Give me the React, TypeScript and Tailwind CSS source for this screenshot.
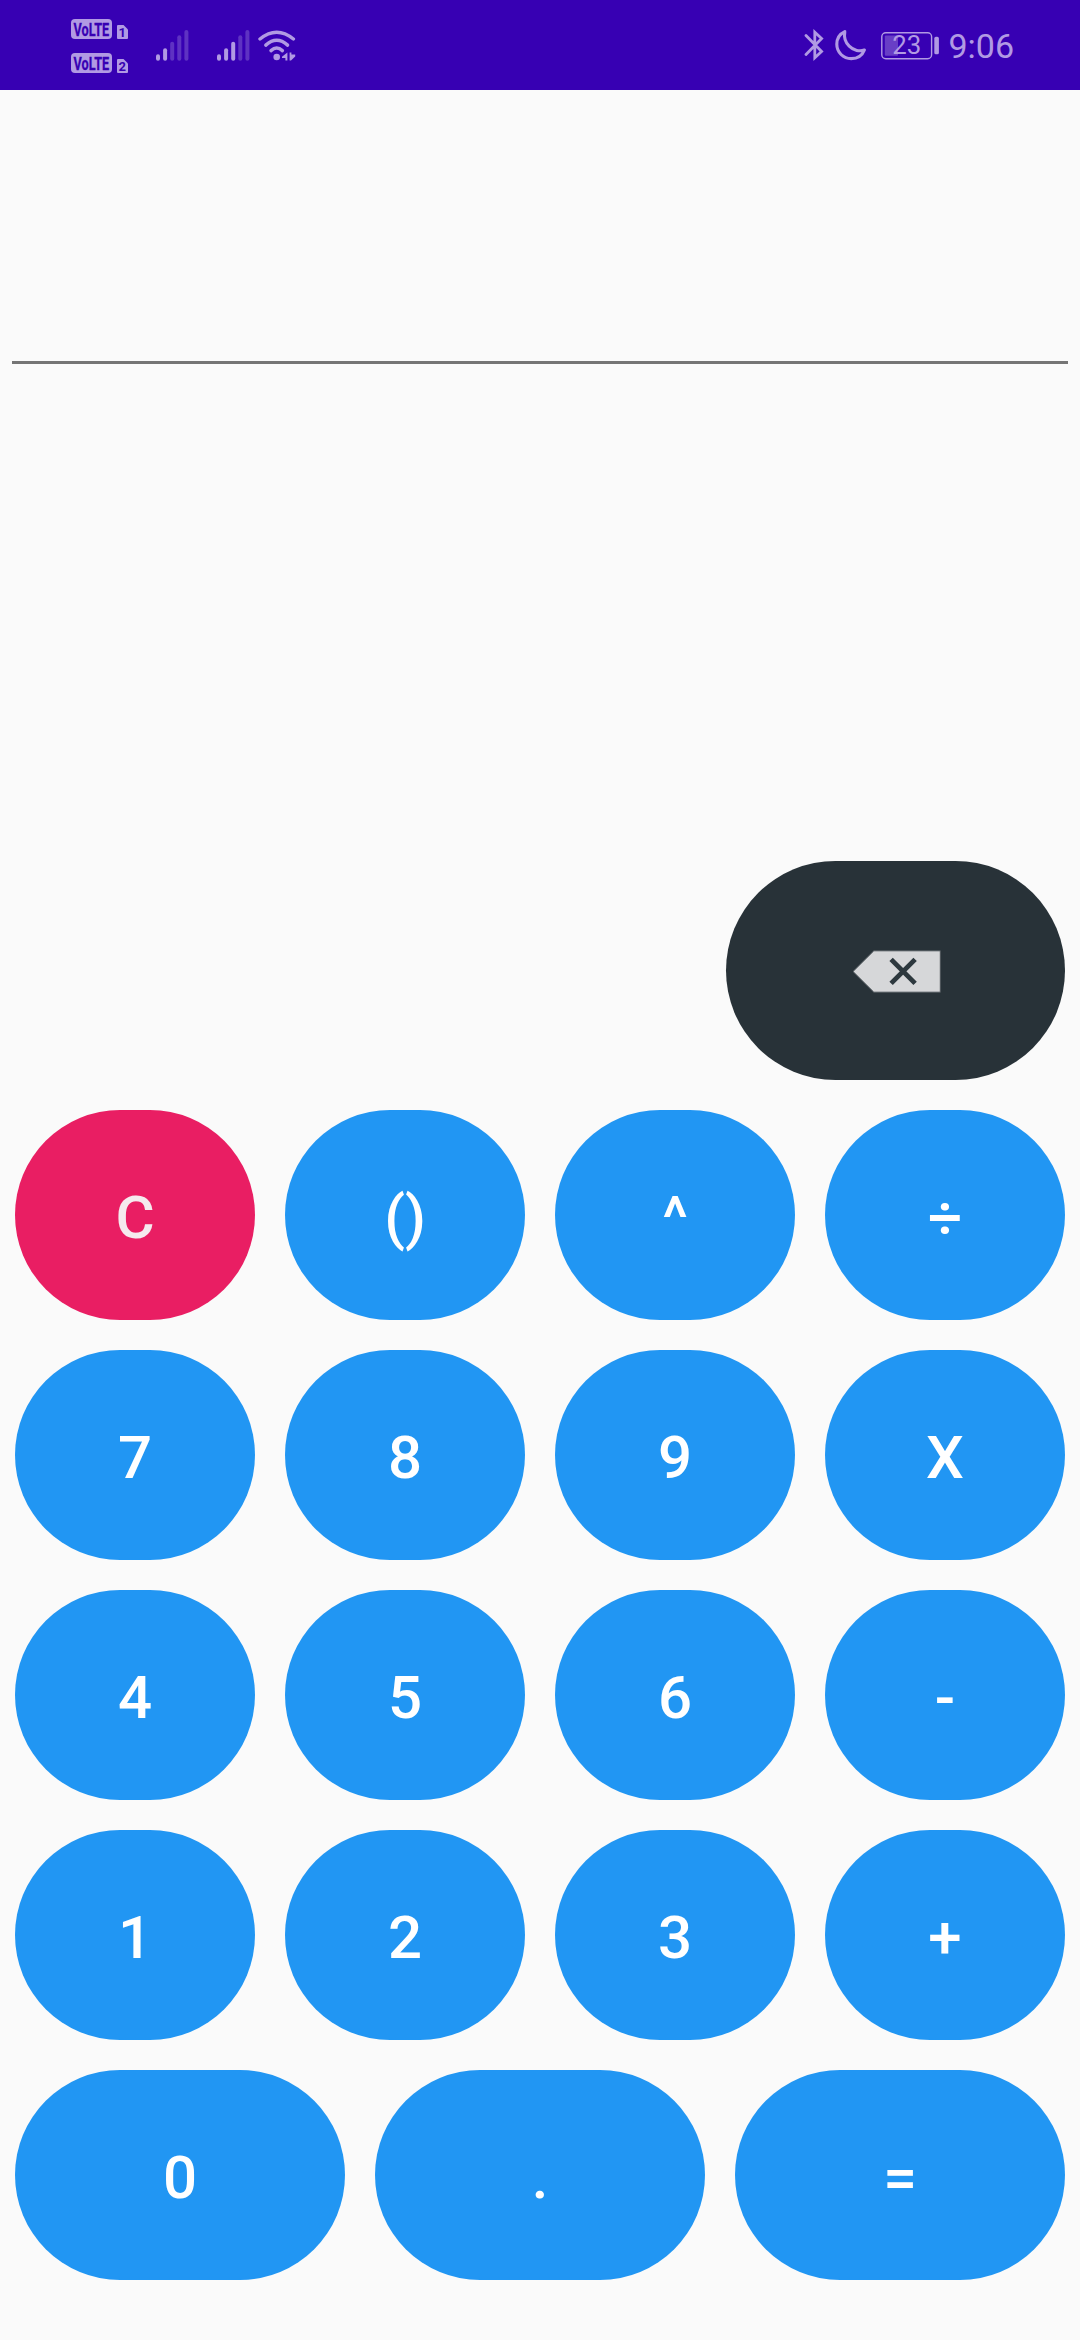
import React from "react";

const TINT = "#b19ae3";
const BAR = "#3700b3";

function VolteBadge({ sim }: { sim: string }) {
  return (
    <svg width="58" height="20" viewBox="0 0 58 20" className="block">
      <rect x="0" y="0" width="41" height="20" rx="4" fill={TINT} />
      <text x="2.6" y="16.6" textLength="35.6" lengthAdjust="spacingAndGlyphs" fontFamily="Roboto, sans-serif" fontWeight="700" fontSize="18.6" fill={BAR} stroke={BAR} strokeWidth="0.3">
        VoLTE
      </text>
      <path d="M47 6 H52.5 L57 10.5 V19 Q57 20 56 20 H47 Q46 20 46 19 V7 Q46 6 47 6 Z" fill={TINT} />
      <text x="51.2" y="18.2" textAnchor="middle" fontFamily="Roboto, sans-serif" fontWeight="700" fontSize="13" fill={BAR}>
        {sim}
      </text>
    </svg>
  );
}

function Signal({ level }: { level: number }) {
  const tops = [24.3, 18.3, 11.8, 5.3, 0];
  return (
    <svg width="33" height="31" viewBox="0 0 33 31" className="block">
      {tops.map((top, i) => (
        <rect key={i} x={i * 7.1} y={top} width="4" height={30.8 - top} rx="2" fill={TINT} opacity={i < level ? 1 : 0.32} />
      ))}
    </svg>
  );
}

function Wifi() {
  return (
    <svg width="38" height="31" viewBox="0 0 38 31" className="block">
      <g fill="none" stroke={TINT} strokeWidth="3.4" strokeLinecap="round">
        <path d="M2 9 Q18.7 -4.6 35.4 9" />
        <path d="M7.8 15.1 Q18.7 5.6 29.6 15.1" />
        <path d="M13 20.6 Q18.7 15.6 24.4 20.6" />
      </g>
      <circle cx="18.7" cy="27" r="3.3" fill={TINT} />
      <path d="M24 26.8 L29.4 22.4 V30.4 H27.4 V28 H24 Z" fill={TINT} />
      <path d="M31.6 22.4 H33.4 V24.4 H37.2 V26.4 L33 30.4 H31.6 Z" fill={TINT} />
    </svg>
  );
}

function Bluetooth() {
  return (
    <svg width="20" height="33" viewBox="0 0 20 33" className="block">
      <path d="M2 6.4 L17.6 22.4 L10.8 28.8 V3.2 L17.6 9.6 L2 25.4" fill="none" stroke={TINT} strokeWidth="2.8" strokeLinejoin="miter" strokeLinecap="round" />
    </svg>
  );
}

function Moon() {
  return (
    <svg width="32" height="32" viewBox="0 0 32 32" className="block">
      <path d="M9.8 2.6 C4.5 5 1.8 10 1.8 15.3 C1.8 23.4 8.4 29.6 16.2 29.6 C22.6 29.6 27.4 26.2 29.4 21 C24.8 22.8 18.6 21.6 14.2 17.2 C10.2 13.2 8.8 8 9.8 2.6 Z" fill="none" stroke={TINT} strokeWidth="3.1" strokeLinejoin="round" />
    </svg>
  );
}

function Battery() {
  return (
    <svg width="59" height="28" viewBox="0 0 59 28" className="block">
      <rect x="0.8" y="0.7" width="49.8" height="26" rx="4" fill="none" stroke={TINT} strokeWidth="1.4" />
      <rect x="3.8" y="3.6" width="13.2" height="20.2" rx="1" fill={TINT} opacity="0.4" />
      <rect x="53.3" y="4.8" width="4.6" height="17.5" rx="1.6" fill={TINT} />
      <text x="25.7" y="22" textAnchor="middle" fontFamily="Roboto, sans-serif" fontSize="26" textLength="29" lengthAdjust="spacingAndGlyphs" fill={TINT}>
        23
      </text>
    </svg>
  );
}

function StatusBar() {
  return (
    <header className="flex h-[90px] w-full shrink-0 justify-between bg-[#3700b3] pl-[71px] pr-[66px]">
      <div className="flex">
        <div className="flex flex-col gap-[14px] pt-[19px]">
          <VolteBadge sim="1" />
          <VolteBadge sim="2" />
        </div>
        <div className="ml-[27px] pt-[30px]">
          <Signal level={2} />
        </div>
        <div className="ml-[28px] pt-[30px]">
          <Signal level={3} />
        </div>
        <div className="ml-[8px] pt-[30px]">
          <Wifi />
        </div>
      </div>
      <div className="flex">
        <div className="pt-[29px]">
          <Bluetooth />
        </div>
        <div className="ml-[11px] pt-[29px]">
          <Moon />
        </div>
        <div className="ml-[14px] pt-[32px]">
          <Battery />
        </div>
        <span className="ml-[8px] mt-[26px] text-[34px] leading-[40px] text-[#b19ae3]">9:06</span>
      </div>
    </header>
  );
}

function Key({ label, clear = false }: { label: string; clear?: boolean }) {
  return (
    <button
      className={
        clear
          ? "flex h-[210px] flex-1 items-center justify-center rounded-[105px] bg-[#e91e63] pt-[5px] text-[60px] font-medium leading-[70px] text-[#f5eaee]"
          : "flex h-[210px] flex-1 items-center justify-center rounded-[105px] bg-[#2196f3] pt-[5px] text-[60px] font-medium leading-[70px] text-white"
      }
    >
      {label}
    </button>
  );
}

const ROWS = [
  ["C", "()", "^", "÷"],
  ["7", "8", "9", "X"],
  ["4", "5", "6", "-"],
  ["1", "2", "3", "+"],
  ["0", ".", "="],
];

export default function App() {
  return (
    <div className="flex h-[2340px] w-[1080px] flex-col overflow-hidden bg-[#fafafa] font-['Roboto',sans-serif]">
      <StatusBar />
      <div className="mx-3 h-[274px] shrink-0 border-b-[3px] border-[#757575]" />
      <div className="mt-auto flex justify-end px-[15px]">
        <button aria-label="Delete" className="flex h-[219px] w-[339px] items-center justify-center rounded-[110px] bg-[#283238]">
          <svg width="90" height="45" viewBox="0 0 90 45" className="block translate-y-[1px]">
            <path d="M2 22.5 L22.8 1.8 H89.3 V43.2 H22.8 Z" fill="#d6d7d9" stroke="#4b5358" strokeWidth="1" />
            <path d="M40.1 10.4 L64.1 34.4 M64.1 10.4 L40.1 34.4" stroke="#2d383e" strokeWidth="4.8" />
          </svg>
        </button>
      </div>
      <main className="mb-[60px] mt-[30px] flex flex-col gap-[30px] px-[15px]">
        {ROWS.map((row, i) => (
          <div key={i} className="flex gap-[30px]">
            {row.map((label) => (
              <Key key={label} label={label} clear={label === "C"} />
            ))}
          </div>
        ))}
      </main>
    </div>
  );
}
